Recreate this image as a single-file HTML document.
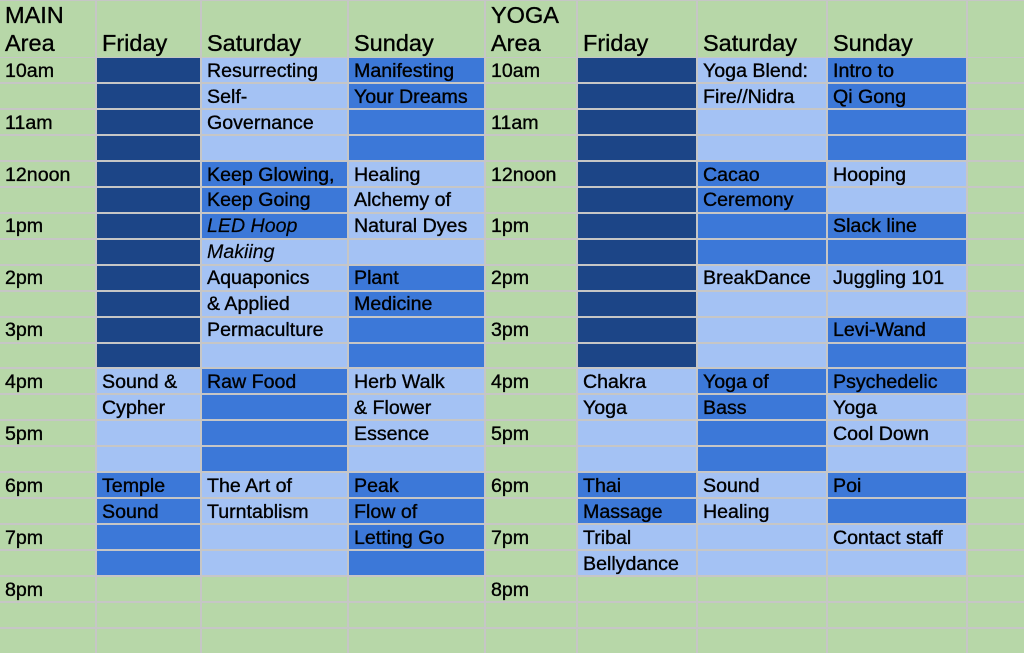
<!DOCTYPE html><html><head><style>
body{margin:0;}
#t{width:1024px;height:653px;display:grid;background:#c6c6c6;gap:2px;
grid-template-columns:95px 103px 145px 135px 90px 118px 128px 138px 1fr;
grid-template-rows:56px repeat(23,1fr);font-family:"Liberation Sans",Arial,sans-serif;font-size:19.6px;color:#000;overflow:hidden;-webkit-text-stroke:0.35px #000}
#t div{white-space:nowrap;padding-left:5px;padding-top:3px;display:flex;align-items:center;overflow:visible;line-height:1}
#t .h{font-size:23.5px;align-items:flex-end;padding-bottom:0;padding-top:0;line-height:28px;position:relative;top:1px}
.g{background:#b7d7a8}.d{background:#1c4587}.m{background:#3c78d8}.l{background:#a4c2f4}
.i{font-style:italic;-webkit-text-stroke:0.15px #000}
</style></head><body><div id="t">
<div class="g h">MAIN<br>Area</div><div class="g h">Friday</div><div class="g h">Saturday</div><div class="g h">Sunday</div><div class="g h">YOGA<br>Area</div><div class="g h">Friday</div><div class="g h">Saturday</div><div class="g h">Sunday</div><div class="g h"></div>
<!--0--><div class="g">10am</div><div class="d"></div><div class="l">Resurrecting</div><div class="m">Manifesting</div><div class="g">10am</div><div class="d"></div><div class="l">Yoga Blend:</div><div class="m">Intro to</div><div class="g"></div>
<!--1--><div class="g"></div><div class="d"></div><div class="l">Self-</div><div class="m">Your Dreams</div><div class="g"></div><div class="d"></div><div class="l">Fire//Nidra</div><div class="m">Qi Gong</div><div class="g"></div>
<!--2--><div class="g">11am</div><div class="d"></div><div class="l">Governance</div><div class="m"></div><div class="g">11am</div><div class="d"></div><div class="l"></div><div class="m"></div><div class="g"></div>
<!--3--><div class="g"></div><div class="d"></div><div class="l"></div><div class="m"></div><div class="g"></div><div class="d"></div><div class="l"></div><div class="m"></div><div class="g"></div>
<!--4--><div class="g">12noon</div><div class="d"></div><div class="m">Keep Glowing,</div><div class="l">Healing</div><div class="g">12noon</div><div class="d"></div><div class="m">Cacao</div><div class="l">Hooping</div><div class="g"></div>
<!--5--><div class="g"></div><div class="d"></div><div class="m">Keep Going</div><div class="l">Alchemy of</div><div class="g"></div><div class="d"></div><div class="m">Ceremony</div><div class="l"></div><div class="g"></div>
<!--6--><div class="g">1pm</div><div class="d"></div><div class="m i">LED Hoop</div><div class="l">Natural Dyes</div><div class="g">1pm</div><div class="d"></div><div class="m"></div><div class="m">Slack line</div><div class="g"></div>
<!--7--><div class="g"></div><div class="d"></div><div class="l i">Makiing</div><div class="l"></div><div class="g"></div><div class="d"></div><div class="m"></div><div class="m"></div><div class="g"></div>
<!--8--><div class="g">2pm</div><div class="d"></div><div class="l">Aquaponics</div><div class="m">Plant</div><div class="g">2pm</div><div class="d"></div><div class="l">BreakDance</div><div class="l">Juggling 101</div><div class="g"></div>
<!--9--><div class="g"></div><div class="d"></div><div class="l">&amp; Applied</div><div class="m">Medicine</div><div class="g"></div><div class="d"></div><div class="l"></div><div class="l"></div><div class="g"></div>
<!--10--><div class="g">3pm</div><div class="d"></div><div class="l">Permaculture</div><div class="m"></div><div class="g">3pm</div><div class="d"></div><div class="l"></div><div class="m">Levi-Wand</div><div class="g"></div>
<!--11--><div class="g"></div><div class="d"></div><div class="l"></div><div class="m"></div><div class="g"></div><div class="d"></div><div class="l"></div><div class="m"></div><div class="g"></div>
<!--12--><div class="g">4pm</div><div class="l">Sound &amp;</div><div class="m">Raw Food</div><div class="l">Herb Walk</div><div class="g">4pm</div><div class="l">Chakra</div><div class="m">Yoga of</div><div class="m">Psychedelic</div><div class="g"></div>
<!--13--><div class="g"></div><div class="l">Cypher</div><div class="m"></div><div class="l">&amp; Flower</div><div class="g"></div><div class="l">Yoga</div><div class="m">Bass</div><div class="l">Yoga</div><div class="g"></div>
<!--14--><div class="g">5pm</div><div class="l"></div><div class="m"></div><div class="l">Essence</div><div class="g">5pm</div><div class="l"></div><div class="m"></div><div class="l">Cool Down</div><div class="g"></div>
<!--15--><div class="g"></div><div class="l"></div><div class="m"></div><div class="l"></div><div class="g"></div><div class="l"></div><div class="m"></div><div class="l"></div><div class="g"></div>
<!--16--><div class="g">6pm</div><div class="m">Temple</div><div class="l">The Art of</div><div class="m">Peak</div><div class="g">6pm</div><div class="m">Thai</div><div class="l">Sound</div><div class="m">Poi</div><div class="g"></div>
<!--17--><div class="g"></div><div class="m">Sound</div><div class="l">Turntablism</div><div class="m">Flow of</div><div class="g"></div><div class="m">Massage</div><div class="l">Healing</div><div class="m"></div><div class="g"></div>
<!--18--><div class="g">7pm</div><div class="m"></div><div class="l"></div><div class="m">Letting Go</div><div class="g">7pm</div><div class="l">Tribal</div><div class="l"></div><div class="l">Contact staff</div><div class="g"></div>
<!--19--><div class="g"></div><div class="m"></div><div class="l"></div><div class="m"></div><div class="g"></div><div class="l">Bellydance</div><div class="l"></div><div class="l"></div><div class="g"></div>
<!--20--><div class="g">8pm</div><div class="g"></div><div class="g"></div><div class="g"></div><div class="g">8pm</div><div class="g"></div><div class="g"></div><div class="g"></div><div class="g"></div>
<!--21--><div class="g"></div><div class="g"></div><div class="g"></div><div class="g"></div><div class="g"></div><div class="g"></div><div class="g"></div><div class="g"></div><div class="g"></div>
<!--22--><div class="g"></div><div class="g"></div><div class="g"></div><div class="g"></div><div class="g"></div><div class="g"></div><div class="g"></div><div class="g"></div><div class="g"></div>
</div></body></html>
